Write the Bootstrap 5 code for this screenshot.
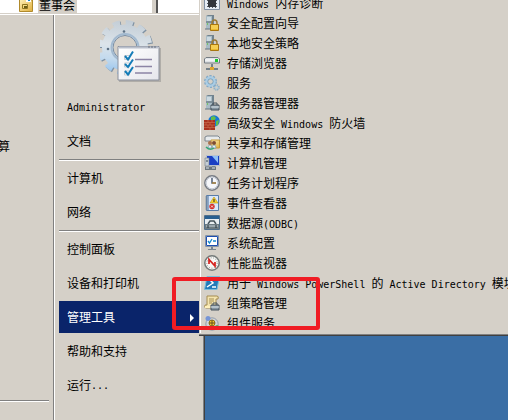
<!DOCTYPE html>
<html lang="zh-CN">
<head>
<meta charset="utf-8">
<meta name="viewport" content="width=device-width, initial-scale=1">
<title>管理工具</title>
<link href="https://cdn.jsdelivr.net/npm/bootstrap@5.3.0/dist/css/bootstrap.min.css" rel="stylesheet">
<style>
:root { --face: #d5d0c8; --navy: #0a246a; --edge: #808080; --dark: #404040; }
body { background: #3a6ea5; color: #000; font: 12px/20px "Liberation Sans", "Noto Sans CJK SC", sans-serif; }
a { color: inherit; text-decoration: none; }
.latin { font-family: "DejaVu Sans Mono", monospace; font-size: 10px; white-space: pre; }
.face { background: var(--face); }
.start-side { width: 205px; }
.explorer { height: 14px; border-bottom: 1px solid var(--face); }
.tree-pane { width: 152px; padding-left: 18px; }
.tree-label { height: 13px; line-height: 13px; padding: 0 2px 0 1px; }
.pane-bar { width: 6px; border-right: 2px solid #555; }
.start-menu { border-top: 1px solid #fff; border-right: 1px solid var(--dark); box-shadow: inset -1px 0 0 var(--edge); }
.programs { width: 54px; border-right: 1px solid var(--edge); }
.program-link { margin-top: 122px; margin-left: -2px; height: 20px; }
.programs .rule { margin: auto 4px 18px 0; }
.places { border-left: 1px solid #fff; padding-left: 4px; padding-right: 5px; }
.hero { height: 76px; padding: 3px 0 0 41px; }
.place { height: 32px; margin-bottom: 2px; padding: 2px 5px 0 8px; }
.place.active { background: var(--navy); color: #fff; }
.rule { height: 2px; border-top: 1px solid var(--edge); border-bottom: 1px solid #fff; }
.places .rule { margin-bottom: 1px; }
.submenu { left: 199px; right: 0; top: 0; border-bottom: 1px solid var(--dark); box-shadow: inset 0 -1px 0 var(--edge); padding: 0 0 2px 1px; }
.tools { border-left: 1px solid #fff; }
.tools-list { margin-top: -7px; }
.tool { height: 20px; padding-left: 3px; gap: 7px; white-space: nowrap; }
.tool svg { flex: none; }
.tool > span { padding-top: 2px; }
.marker { left: 172px; top: 277px; width: 148px; height: 53px; border: 4px solid #f01c24; border-radius: 3px; pointer-events: none; }
</style>
<script src="https://cdn.jsdelivr.net/npm/bootstrap@5.3.0/dist/js/bootstrap.bundle.min.js"></script>
</head>
<body>
<svg width="0" height="0" class="position-absolute" aria-hidden="true">
  <defs>
    <linearGradient id="steel" gradientUnits="userSpaceOnUse" x1="118" y1="20" x2="112" y2="76"><stop offset="0" stop-color="#c3cdd6"/><stop offset=".45" stop-color="#dce4ea"/><stop offset=".7" stop-color="#c3daee"/><stop offset="1" stop-color="#8fc0ee"/></linearGradient>
    <linearGradient id="paper" x1="0" y1="0" x2="1" y2="1"><stop offset="0" stop-color="#fff"/><stop offset="1" stop-color="#e6e6ec"/></linearGradient>
    <linearGradient id="gold" x1="0" y1="0" x2="1" y2="1"><stop offset="0" stop-color="#fff3ba"/><stop offset="1" stop-color="#dfae3c"/></linearGradient>
    <g id="tower"><path d="M2 1l2-1h6v13l-2 1H2z" fill="#71838f"/><path d="M2 1h6v13H2z" fill="#a9bcc6"/><path d="M3 3h4M3 5h4" stroke="#eef6fa"/><path d="M2 7h6" stroke="#55666f"/><path d="M3 9h1" stroke="#4c0"/><path d="M1 14h8" stroke="#667580"/></g>
    <g id="lock"><path d="M8 10V8q0-3 2.500-3T13 8v2" fill="none" stroke="#9b7b35" stroke-width="1.500"/><path d="M6.500 9.500h8v6h-8z" fill="#eab92d" stroke="#a87610"/><path d="M7 11h7M7 13h7" stroke="#ffe378"/></g>
    <g id="case"><path d="M9 10V8h4v2" fill="none" stroke="#46525c"/><path d="M7 10h8v5H7z" fill="#8797a3" stroke="#46525c"/><path d="M7 12h8" stroke="#e3edf2"/></g>
  </defs>
</svg>

<main class="position-relative overflow-hidden vh-100">
  <div class="start-side d-flex flex-column h-100">
    <div class="explorer d-flex face flex-shrink-0 overflow-hidden">
      <div class="tree-pane d-flex bg-white">
        <svg width="16" height="13" viewBox="0 0 16 13" aria-hidden="true"><path d="M1.500-1h6l1 1h6v11.500h-13z" fill="url(#gold)" stroke="#b08a2c"/><path d="M8 0h5v2H8z" fill="#fff"/><path d="M10 0h2v1h-2z" fill="#168bd0"/><path d="M4.500 4.500h5v4h-5z" fill="#f4dc80" stroke="#8c7520"/><path d="M6 6h3v2H6z" fill="#695c15"/></svg>
        <span class="tree-label face ms-1">董事会</span>
      </div>
      <div class="pane-bar face"></div>
      <div class="bg-white flex-grow-1"></div>
    </div>
    <div class="start-menu face d-flex flex-grow-1">
      <div class="programs d-flex flex-column flex-shrink-0">
        <a href="#" class="program-link">算</a>
        <div class="rule"></div>
      </div>
      <nav class="places flex-grow-1" aria-label="开始菜单">
        <div class="hero">
          <svg width="62" height="66" viewBox="99 18 62 66" aria-hidden="true">
            <g fill="none">
              <circle cx="125" cy="48.500" r="24" stroke="#7f92a4" stroke-width="7" stroke-dasharray="7 5.566"/>
              <circle cx="124" cy="47.500" r="24" stroke="url(#steel)" stroke-width="7" stroke-dasharray="7 5.566"/>
              <circle cx="124" cy="47.500" r="17.500" stroke="url(#steel)" stroke-width="11"/>
              <circle cx="124" cy="47.500" r="12" stroke="#778ca3"/>
              <circle cx="124" cy="47.500" r="13.500" stroke="#a3bad0" stroke-width="2"/>
            </g>
            <g fill="#5d7185"><circle cx="123" cy="31.500" r="1.300"/><circle cx="107" cy="49" r="1.300"/></g>
            <path d="M118 48h42v34h-42z" fill="#777" opacity=".4"/>
            <path d="M117 46.500h41v33.500h-41z" fill="url(#paper)" stroke="#8a909d"/>
            <path d="M118 47.500h39" stroke="#b9bfcb" stroke-width="2"/><path d="M147 47h2m1 0h2m1 0h2" stroke="#69707e"/>
            <path d="M134 59.500h17M134 66.500h17M134 73h17" stroke="#8c84a5" stroke-width="1.500"/>
            <path d="M123.500 55.500h5v4h-5zm0 7.500h5v4h-5zm0 8h5v4h-5z" fill="#fff" stroke="#c3cbd3"/>
            <path d="M124 56l3 3.500 5-8M124 64l3 3 5-7.500M124 71l3 3.500 5-7.500" fill="none" stroke="#147cb8" stroke-width="2"/>
          </svg>
        </div>
        <a href="#" class="place d-flex align-items-center"><span class="latin">Administrator</span></a>
        <a href="#" class="place d-flex align-items-center">文档</a>
        <div class="rule"></div>
        <a href="#" class="place d-flex align-items-center">计算机</a>
        <a href="#" class="place d-flex align-items-center">网络</a>
        <div class="rule"></div>
        <a href="#" class="place d-flex align-items-center">控制面板</a>
        <a href="#" class="place d-flex align-items-center">设备和打印机</a>
        <a href="#" class="place active d-flex align-items-center justify-content-between" aria-haspopup="true" aria-expanded="true">管理工具
          <svg width="4" height="8" viewBox="0 0 4 8" aria-hidden="true"><path d="M0 0l4 4-4 4z" fill="currentColor"/></svg></a>
        <a href="#" class="place d-flex align-items-center">帮助和支持</a>
        <a href="#" class="place d-flex align-items-center">运行<span class="latin">...</span></a>
      </nav>
    </div>
  </div>

  <nav class="submenu face position-absolute overflow-hidden" aria-label="管理工具">
    <div class="tools"><div class="tools-list">
      <a href="#" class="tool d-flex align-items-center"><svg width="16" height="16" viewBox="0 0 16 16"><path d="M.5.5h15v14H.5z" fill="#e6edf5" stroke="#8291a3"/><path d="M4 4h8v8H4z" fill="#34373d"/><path d="M3 5.500h10M3 8.500h10M3 11.500h10M5.500 3v10M8.500 3v10M11.500 3v10" stroke="#34373d" stroke-width=".8"/></svg><span><span class="latin">Windows </span>内存诊断</span></a>
      <a href="#" class="tool d-flex align-items-center"><svg width="16" height="16" viewBox="0 0 16 16"><use href="#tower"/><use href="#lock"/></svg><span>安全配置向导</span></a>
      <a href="#" class="tool d-flex align-items-center"><svg width="16" height="16" viewBox="0 0 16 16"><use href="#tower"/><use href="#lock"/></svg><span>本地安全策略</span></a>
      <a href="#" class="tool d-flex align-items-center"><svg width="16" height="16" viewBox="0 0 16 16"><path d="M2 2.500h12l1.500 1.500v4H.5V4z" fill="#dfe2e5" stroke="#747c83"/><path d="M1 5h14" stroke="#fff"/><path d="M11 4h3v3h-3z" fill="#1cc82a"/><path d="M8 9v4M2 14h12" stroke="#536673" stroke-width="1.500"/><path d="M6 12h4v3H6z" fill="#e0a52d"/></svg><span>存储浏览器</span></a>
      <a href="#" class="tool d-flex align-items-center"><svg width="16" height="16" viewBox="0 0 16 16" fill="none"><circle cx="6.500" cy="6.500" r="5.600" stroke="#86abc7" stroke-width="1.800" stroke-dasharray="2.200 1.318"/><circle cx="6.500" cy="6.500" r="4" stroke="#a9cde6" stroke-width="2.400"/><circle cx="6.500" cy="6.500" r="2.700" stroke="#6d9abb" stroke-width=".8"/><circle cx="12.500" cy="12.500" r="2.500" stroke="#86a9c3" stroke-width="1.500" stroke-dasharray="1.200 .76"/><circle cx="12.500" cy="12.500" r="1.600" stroke="#a4c6dd"/></svg><span>服务</span></a>
      <a href="#" class="tool d-flex align-items-center"><svg width="16" height="16" viewBox="0 0 16 16"><use href="#tower"/><use href="#case"/></svg><span>服务器管理器</span></a>
      <a href="#" class="tool d-flex align-items-center"><svg width="16" height="16" viewBox="0 0 16 16"><circle cx="10" cy="6" r="5.700" fill="#1778d4"/><path d="M7 2l3-1 2 2-2 3-3-1zM12 6l3-1-1 5-2 1z" fill="#62bd48"/><path d="M0 5h11v10H0z" fill="#a93220"/><path d="M0 7.500h11M0 10h11M0 12.500h11M4 5v2.500M8 5v2.500M2 7.500V10M6 7.500V10M4 10v2.500M8 10v2.500M6 12.500V15" stroke="#cf7554" stroke-width=".6"/></svg><span>高级安全<span class="latin"> Windows </span>防火墙</span></a>
      <a href="#" class="tool d-flex align-items-center"><svg width="16" height="16" viewBox="0 0 16 16"><path d="M1 2l2-1h11l2 2v3H1z" fill="#e7eaec" stroke="#7d868e"/><path d="M7 5h8.500v8H7z" fill="url(#gold)" stroke="#c79a38"/><circle cx="6" cy="8" r="2" fill="#a9704b"/><circle cx="10" cy="8" r="2" fill="#7e4c33"/><path d="M4 13q0-3 2-3t2 3zM8 13q0-3 2-3t2 3z" fill="#e4eff4" stroke="#6a8fa0" stroke-width=".6"/><path d="M2 12q4 4 8 1" fill="none" stroke="#35a67a" stroke-width="1.500"/></svg><span>共享和存储管理</span></a>
      <a href="#" class="tool d-flex align-items-center"><svg width="16" height="16" viewBox="0 0 16 16"><path d="M2.500.5h13v10h-13z" fill="#1a3fc4" stroke="#b9c2cc"/><path d="M8 1h6v7z" fill="#8fc1f6"/><path d="M1 3h4v8H1z" fill="#c6ced5" stroke="#74808a" stroke-width=".6"/><path d="M2 6h2" stroke="#3b4a55"/><path d="M8 11h3v2H8z" fill="#89939a"/><path d="M1 11.500h11v3.500H1z" fill="#69757e"/><path d="M2 13h3m3 0h3" stroke="#dce4ea"/></svg><span>计算机管理</span></a>
      <a href="#" class="tool d-flex align-items-center"><svg width="16" height="16" viewBox="0 0 16 16"><circle cx="8" cy="8" r="7.200" fill="#f6f7fa" stroke="#777c84" stroke-width="1.500"/><circle cx="8" cy="8" r="5.800" fill="none" stroke="#c5cbd6"/><path d="M8 3v5h4" fill="none" stroke="#344761" stroke-width="1.300"/><path d="M8 8h4" stroke="#e4a22f"/></svg><span>任务计划程序</span></a>
      <a href="#" class="tool d-flex align-items-center"><svg width="16" height="16" viewBox="0 0 16 16"><path d="M2.500.5h12v15h-12z" fill="#d9e8fb" stroke="#597da9"/><path d="M4 1v14" stroke="#426a9d"/><path d="M1 2h3M1 4h3M1 6h3M1 8h3M1 10h3M1 12h3M1 14h3" stroke="#87929d" stroke-width=".8"/><path d="M10 2l4 6H6z" fill="#ffd52e" stroke="#b39016" stroke-width=".6"/><path d="M10 4v3" stroke="#222"/><circle cx="8" cy="11.500" r="2.700" fill="#d62d28"/><path d="M7 10.500l2 2m0-2l-2 2" stroke="#fff" stroke-width=".8"/></svg><span>事件查看器</span></a>
      <a href="#" class="tool d-flex align-items-center"><svg width="16" height="16" viewBox="0 0 16 16"><path d="M.5.5h15v14H.5z" fill="#e9eef2" stroke="#536f89"/><path d="M1 1h14v3H1z" fill="#285f91"/><path d="M4 9l2-3h4l2 3" fill="none" stroke="#46545c" stroke-width="1.500"/><path d="M1 9h14v5H1z" fill="#6d7b82"/><path d="M2 11h12" stroke="#c8d3d8"/><path d="M4 10v3M12 10v3" stroke="#26333a"/></svg><span>数据源<span class="latin">(ODBC)</span></span></a>
      <a href="#" class="tool d-flex align-items-center"><svg width="16" height="16" viewBox="0 0 16 16"><path d="M1.500.5h13v11h-13z" fill="#f6faff" stroke="#8794a4"/><path d="M2.500 1.500h11v9h-11z" fill="#fff" stroke="#1d4eb0"/><path d="M4 6l1.500 2L8 4M9 6h3" fill="none" stroke="#1686cc" stroke-width="1.300"/><path d="M7 12h2v2h3v1H4v-1h3z" fill="#788590"/></svg><span>系统配置</span></a>
      <a href="#" class="tool d-flex align-items-center"><svg width="16" height="16" viewBox="0 0 16 16"><circle cx="8" cy="8" r="7.200" fill="#f7f7f5" stroke="#747a79" stroke-width="1.500"/><circle cx="8" cy="8" r="5.200" fill="none" stroke="#87918a" stroke-dasharray="1 1.500"/><path d="M5 9V4.500l6 6.500V7" fill="none" stroke="#d5221e" stroke-width="1.700"/></svg><span>性能监视器</span></a>
      <a href="#" class="tool d-flex align-items-center"><svg width="16" height="16" viewBox="0 0 16 16"><path d="M3 1.500h12.500l-2.500 13H.5z" fill="#247bb9" stroke="#78bddd"/><path d="M5 4l4 4-6 4M8 12h4" fill="none" stroke="#fff" stroke-width="1.500"/></svg><span>用于<span class="latin"> Windows PowerShell </span>的<span class="latin"> Active Directory </span>模块</span></a>
      <a href="#" class="tool d-flex align-items-center"><svg width="16" height="16" viewBox="0 0 16 16"><path d="M3 1h10q2 0 1 3h-2v9H2q-2 0-1-3h2z" fill="#f4e4af" stroke="#a48c52"/><path d="M5 4h5M5 6h5M5 8h3" stroke="#a58f55"/><path d="M1 11h7v2H1z" fill="#fff0bb"/><use href="#case"/></svg><span>组策略管理</span></a>
      <a href="#" class="tool d-flex align-items-center"><svg width="16" height="16" viewBox="0 0 16 16"><circle cx="8" cy="9" r="6.200" fill="#d0d4da" stroke="#949ca7"/><circle cx="4" cy="3.500" r="2.500" fill="#7795d6"/><circle cx="8" cy="8" r="3" fill="#f1c431" stroke="#947522"/><path d="M8 5v6M5 8h6" stroke="#62511d"/><circle cx="13" cy="12" r="2" fill="#55b35c"/></svg><span>组件服务</span></a>
    </div></div>
  </nav>
  <div class="marker position-absolute"></div>
</main>
</body>
</html>
